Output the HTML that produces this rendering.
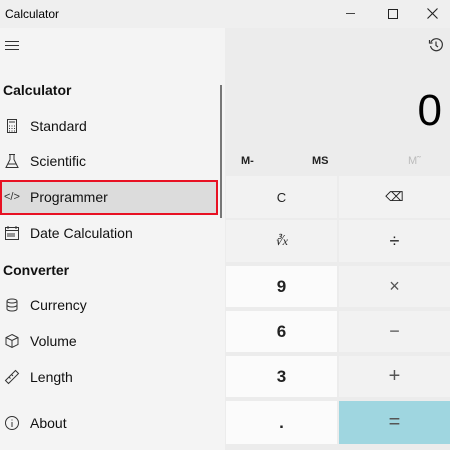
<!DOCTYPE html><html><head><style>
body{margin:0;width:450px;height:450px;overflow:hidden;background:#ececec;font-family:"Liberation Sans",sans-serif;position:relative}
.a{position:absolute}
.t{font-size:13px;color:#000}
.btn{position:absolute;display:flex;align-items:center;justify-content:center;font-size:16px;color:#222}
.w{background:#fbfbfb;font-weight:bold;font-size:17px}
.g{background:#f2f2f2}
.nav{position:absolute;left:30px;font-size:14px;color:#111}
.ic{position:absolute;left:4px;width:16px;height:16px}
</style></head><body>
<div class="a" style="left:0;top:0;width:450px;height:28px;background:#efefef"></div>
<div class="a t" style="left:5px;top:7px;font-size:12px">Calculator</div>
<div class="a" style="left:346px;top:13px;width:9px;height:1px;background:#444"></div>
<div class="a" style="left:388px;top:9px;width:8px;height:8px;border:1px solid #222"></div>
<svg class="a" style="left:427px;top:8px" width="11" height="11" viewBox="0 0 11 11" stroke="#222" stroke-width="1.1"><path d="M0.5 0.5L10.5 10.5M10.5 0.5L0.5 10.5"/></svg>
<!-- right -->
<svg class="a" style="left:428px;top:37px" width="16" height="16" viewBox="0 0 16 16" fill="none" stroke="#333" stroke-width="1.2"><path d="M3 5A6 6 0 1 1 2.5 9"/><path d="M1.5 3V6H4.5"/><path d="M8 4.5V8.5L10 10"/></svg>
<div class="a" style="right:8px;top:86px;font-size:44px;color:#000">0</div>
<div class="a" style="left:241px;top:155px;font-size:11px;font-weight:bold;color:#222">M-</div>
<div class="a" style="left:312px;top:155px;font-size:11px;font-weight:bold;color:#222">MS</div>
<div class="a" style="left:408px;top:155px;font-size:11px;color:#bbb">M˜</div>
<div class="btn g" style="left:226px;top:176px;width:111px;height:42px;font-size:13px">C</div>
<div class="btn g" style="left:339px;top:176px;width:111px;height:42px;font-size:13px">⌫</div>
<div class="btn g" style="left:226px;top:220px;width:111px;height:42px;font-family:'Liberation Serif';font-size:12px;font-style:italic">∛x</div>
<div class="btn g" style="left:339px;top:220px;width:111px;height:42px;font-size:18px">÷</div>
<div class="btn w" style="left:226px;top:266px;width:111px;height:41px">9</div>
<div class="btn g" style="left:339px;top:266px;width:111px;height:41px;font-size:18px;color:#555">×</div>
<div class="btn w" style="left:226px;top:311px;width:111px;height:41px">6</div>
<div class="btn g" style="left:339px;top:311px;width:111px;height:41px;font-size:18px;color:#555">−</div>
<div class="btn w" style="left:226px;top:356px;width:111px;height:41px">3</div>
<div class="btn g" style="left:339px;top:356px;width:111px;height:41px;font-size:20px;color:#555">+</div>
<div class="btn w" style="left:226px;top:401px;width:111px;height:43px">.</div>
<div class="btn" style="left:339px;top:401px;width:111px;height:43px;background:#9fd6e0;font-size:20px;color:#555">=</div>
<!-- left pane -->
<div class="a" style="left:0;top:28px;width:225px;height:422px;background:#f4f4f4"></div>
<div class="a" style="left:5px;top:41px;width:14px;height:1px;background:#333;box-shadow:0 4px #333,0 8px #333"></div>
<div class="a" style="left:3px;top:82px;font-size:14px;font-weight:bold;color:#111">Calculator</div>
<div class="a" style="left:220px;top:85px;width:2px;height:133px;background:#777"></div>
<svg class="ic" style="top:118px" viewBox="0 0 16 16" fill="none" stroke="#333"><rect x="3.5" y="1.5" width="9" height="13"/><path d="M5 4h6M5 8h1M7.5 8h1M10 8h1M5 10.5h1M7.5 10.5h1M10 10.5h1M5 13h1M7.5 13h1M10 13h1"/></svg>
<div class="nav" style="top:118px">Standard</div>
<svg class="ic" style="top:153px" viewBox="0 0 16 16" fill="none" stroke="#333"><path d="M5 1.5h6M6 1.5v5L2 14.5h12L10 6.5v-5M4 11h8"/></svg>
<div class="nav" style="top:153px">Scientific</div>
<div class="a" style="left:0;top:180px;width:214px;height:31px;background:#dcdcdc;border:2px solid #e81123"></div>
<div class="a" style="left:4px;top:191px;font-size:11px;color:#333">&lt;/&gt;</div>
<div class="nav" style="top:189px">Programmer</div>
<svg class="ic" style="top:225px" viewBox="0 0 16 16" fill="none" stroke="#333"><rect x="1.5" y="2.5" width="13" height="12"/><path d="M1.5 5.5h13M4 1v3M12 1v3M4 8v4M6 8v4M8 8v4M10 8v4"/></svg>
<div class="nav" style="top:225px">Date Calculation</div>
<div class="a" style="left:3px;top:262px;font-size:14px;font-weight:bold;color:#111">Converter</div>
<svg class="ic" style="top:297px" viewBox="0 0 16 16" fill="none" stroke="#333"><ellipse cx="8" cy="4" rx="5" ry="2"/><path d="M3 4v8c0 1 2 2 5 2s5-1 5-2V4M3 8c0 1 2 2 5 2s5-1 5-2"/></svg>
<div class="nav" style="top:297px">Currency</div>
<svg class="ic" style="top:333px" viewBox="0 0 16 16" fill="none" stroke="#333"><path d="M8 1.5l6 3v7l-6 3-6-3v-7zM2 4.5l6 3 6-3M8 7.5v7"/></svg>
<div class="nav" style="top:333px">Volume</div>
<svg class="ic" style="top:369px" viewBox="0 0 16 16" fill="none" stroke="#333"><path d="M1.5 11.5l10-10 3 3-10 10zM5 8l1.5 1.5M7.5 5.5L9 7"/></svg>
<div class="nav" style="top:369px">Length</div>
<svg class="ic" style="top:415px" viewBox="0 0 16 16" fill="none" stroke="#333"><circle cx="8" cy="8" r="6.5"/><path d="M8 7v5M8 4.5v1"/></svg>
<div class="nav" style="top:415px">About</div>
</body></html>
